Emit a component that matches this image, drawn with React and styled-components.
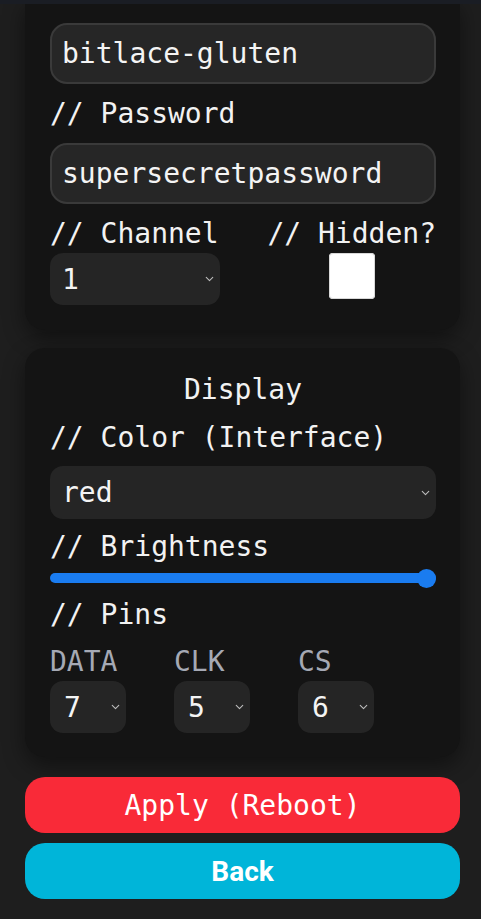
import React from "react";
import styled, { createGlobalStyle } from "styled-components";
import { ChevronDown } from "lucide-react";

const GlobalStyle = createGlobalStyle`
  html, body {
    margin: 0;
    padding: 0;
    background: #1e1e1e;
  }
  body {
    font-family: "DejaVu Sans Mono", "Liberation Mono", monospace;
    color: #f2f2f2;
  }
`;

const TopEdge = styled.div`
  position: fixed;
  top: 0;
  left: 0;
  right: 0;
  height: 4px;
  background: #1a1d24;
  z-index: 2;
`;

const Page = styled.div`
  display: flex;
  flex-direction: column;
  padding: 0 21px 20px 25px;
`;

const Card = styled.section`
  background: #141414;
  border-radius: ${(p) => (p.$cut ? "0 0 20px 20px" : "20px")};
  padding: ${(p) => (p.$cut ? "23px 24px 25px 25px" : "25px 24px 24px 25px")};
  box-shadow: 0 8px 22px rgba(0, 0, 0, 0.45);
  display: flex;
  flex-direction: column;
  & + & {
    margin-top: 18px;
  }
`;

const Title = styled.h2`
  margin: 0;
  font-size: 28px;
  font-weight: 400;
  line-height: 33px;
  text-align: center;
`;

const Label = styled.label`
  display: block;
  font-size: 28px;
  line-height: 33px;
  margin: ${(p) => p.$m || "13px 0"};
  white-space: nowrap;
`;

const TextInput = styled.input`
  box-sizing: border-box;
  width: 100%;
  height: 61px;
  border: 2px solid #3a3a3a;
  border-radius: 17px;
  background: #262626;
  color: #f4f4f4;
  font-family: inherit;
  font-size: 28px;
  padding: 0 10px;
  outline: none;
`;

const SelectWrap = styled.div`
  position: relative;
  width: ${(p) => p.$w || "100%"};
  height: ${(p) => p.$h || "53px"};
`;

const Select = styled.select`
  appearance: none;
  box-sizing: border-box;
  width: 100%;
  height: 100%;
  border: none;
  border-radius: 13px;
  background: #252525;
  color: #f4f4f4;
  font-family: inherit;
  font-size: 28px;
  padding: 0 0 0 ${(p) => p.$pl || "12px"};
  outline: none;
`;

const Chevron = styled(ChevronDown)`
  position: absolute;
  right: 4px;
  top: 50%;
  transform: translateY(-50%);
  color: #bcbcbc;
  pointer-events: none;
`;

const Row = styled.div`
  display: flex;
  justify-content: space-between;
`;

const Col = styled.div`
  display: flex;
  flex-direction: column;
  align-items: ${(p) => p.$align || "flex-start"};
`;

const Check = styled.input`
  appearance: none;
  margin: 0;
  width: 46px;
  height: 46px;
  border-radius: 4px;
  background: #ffffff;
  box-shadow: 0 0 0 1px #d8d8d8 inset;
`;

const Range = styled.input`
  appearance: none;
  -webkit-appearance: none;
  width: 100%;
  height: 10px;
  margin: 10px 0 0;
  border-radius: 5px;
  background: #1a7cf0;
  outline: none;
  &::-webkit-slider-thumb {
    -webkit-appearance: none;
    width: 19px;
    height: 19px;
    border-radius: 50%;
    background: #1a7cf0;
    border: none;
  }
`;

const Pins = styled.div`
  display: grid;
  grid-template-columns: repeat(3, 124px);
`;

const PinLabel = styled.div`
  font-size: 28px;
  line-height: 33px;
  color: #a5a9b4;
  margin-bottom: 3px;
`;

const Button = styled.button`
  box-sizing: border-box;
  width: 100%;
  height: 56px;
  border: none;
  border-radius: 20px;
  background: ${(p) => p.$bg};
  color: #ffffff;
  font-family: ${(p) =>
    p.$sans ? '"Roboto", "Liberation Sans", sans-serif' : "inherit"};
  font-weight: ${(p) => (p.$sans ? 700 : 400)};
  font-size: 28px;
  cursor: pointer;
  margin-top: ${(p) => p.$mt || "10px"};
`;

const PinSelect = ({ name, value }) => (
  <Col>
    <PinLabel>{name}</PinLabel>
    <SelectWrap $w="76px" $h="52px">
      <Select $pl="14px" defaultValue={value}>
        {[1, 2, 3, 4, 5, 6, 7, 8].map((n) => (
          <option key={n}>{n}</option>
        ))}
      </Select>
      <Chevron size={13} />
    </SelectWrap>
  </Col>
);

const App = () => (
  <>
    <GlobalStyle />
    <TopEdge />
    <Page>
      <Card $cut>
        <TextInput defaultValue="bitlace-gluten" />
        <Label>// Password</Label>
        <TextInput defaultValue="supersecretpassword" />
        <Row>
          <Col>
            <Label $m="13px 0 3px">// Channel</Label>
            <SelectWrap $w="170px" $h="52px">
              <Select defaultValue="1">
                {[1, 2, 3, 4, 5, 6, 7, 8, 9, 10, 11].map((n) => (
                  <option key={n}>{n}</option>
                ))}
              </Select>
              <Chevron size={13} />
            </SelectWrap>
          </Col>
          <Col $align="center">
            <Label $m="13px 0 3px">// Hidden?</Label>
            <Check type="checkbox" />
          </Col>
        </Row>
      </Card>

      <Card>
        <Title>Display</Title>
        <Label $m="15px 0 12px">// Color (Interface)</Label>
        <SelectWrap>
          <Select defaultValue="red">
            <option>red</option>
            <option>green</option>
            <option>blue</option>
          </Select>
          <Chevron size={13} />
        </SelectWrap>
        <Label $m="11px 0 0">// Brightness</Label>
        <Range type="range" min="0" max="100" defaultValue="100" />
        <Label $m="15px 0 14px">// Pins</Label>
        <Pins>
          <PinSelect name="DATA" value="7" />
          <PinSelect name="CLK" value="5" />
          <PinSelect name="CS" value="6" />
        </Pins>
      </Card>

      <Button $bg="#f92a38" $mt="20px">Apply (Reboot)</Button>
      <Button $bg="#00b5d9" $sans>Back</Button>
    </Page>
  </>
);

export default App;
